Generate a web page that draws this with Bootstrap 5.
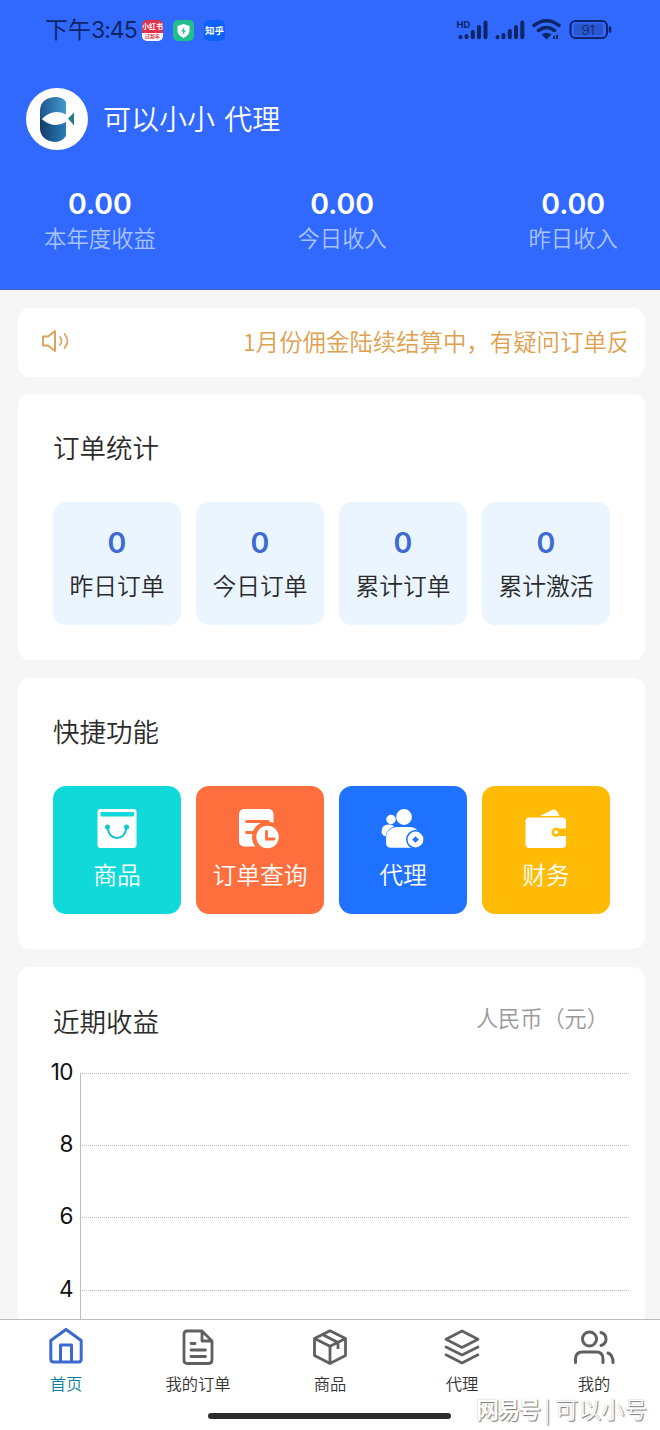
<!DOCTYPE html>
<html lang="zh-CN">
<head>
<meta charset="utf-8">
<meta name="viewport" content="width=device-width, initial-scale=1">
<title>首页</title>
<link rel="stylesheet" href="https://cdn.jsdelivr.net/npm/bootstrap@5.3.0/dist/css/bootstrap.min.css">
<style>
body{width:660px;height:1430px;overflow:hidden;background:#f6f6f7;color:#2b2b2b;font-family:Inter,"Noto Sans CJK SC",sans-serif;font-weight:350;line-height:1}
.cjk{font-family:"Noto Sans CJK SC",sans-serif}
svg{display:block;flex:none}
.hero{height:290px;background:#3169ff;border-bottom:1px solid #3b63d5}
.status{height:58px;padding:2px 48px 0 45px;color:#0d2566}
.clock{width:93px;font-size:23px;font-weight:400;white-space:nowrap}
.clock span{letter-spacing:-1px}
.app{width:21px;height:21px;border-radius:5px;overflow:hidden;font-size:7px;font-weight:700;line-height:12px;text-align:center;color:#fff;white-space:nowrap}
.user{margin-top:30px;height:62px;padding-left:26px;gap:15px}
.user-name{font-size:28px;white-space:pre;word-spacing:3px;padding-bottom:2px}
.figures{margin-top:36px;padding:0 42px 0 44px;text-align:center}
.figures b{display:block;font-size:28.5px;font-weight:600;line-height:36px}
.figures span{display:block;font-size:22.4px;line-height:32px;margin-top:1px;color:#a9c3ff}
.panel{margin-left:18px;width:627px;background:#fff;border-radius:12px}
.notice{margin-top:18px;height:69px;padding:0 19px 4px 23px;color:#e0a04e}
.ticker{margin-left:172px;width:383px;overflow:hidden;white-space:nowrap;font-size:23.4px;line-height:36px}
.panel h2{margin:0;font-size:26.5px;font-weight:350;line-height:36px}
.orders{margin-top:17px;height:266px;padding:36px 35px 0}
.quick{margin-top:18px;height:271px;padding:36px 35px 0}
.tiles{display:grid;grid-template-columns:repeat(4,128px);gap:15px;text-align:center;margin-top:36px}
.tile{border-radius:13px;font-size:23.8px}
.orders .tile{height:123px;background:#eaf5ff;padding-top:23px}
.orders b{display:block;font-size:28.5px;font-weight:600;line-height:36px;color:#3d6bd3}
.orders .tile span{display:block;line-height:36px;margin-top:8px}
.quick .tile{height:128px;color:#fff;padding-top:22px}
.quick .tile svg{margin:0 auto}
.quick .tile span{display:block;line-height:36px;margin-top:7px}
.income{margin-top:18px;height:352px;padding:37px 16px 0 35px;border-radius:12px 12px 0 0;overflow:hidden}
.unit{font-size:22.2px;line-height:30px;color:#999;margin-right:20px}
.chart{display:grid;grid-template-columns:20px 549px;column-gap:7px;margin-top:33px}
.ylab{font-size:22.5px;font-weight:400;color:#111;height:72.2px;line-height:22px;display:flex;justify-content:flex-end;letter-spacing:-.5px}
.ylab span{margin-top:-12px;height:22px}
.cell{height:72.2px;border-left:1px solid #bdbdbd;border-top:1px dotted #bbb}
.tabs{height:111px;background:#fff;border-top:1px solid #bcbcbc}
.tab-item{width:132px;font-size:16.3px;line-height:24px;color:#333;padding-top:8px}
.tab-item svg{margin-bottom:6px}
.pill{position:absolute;left:208px;top:1413px;width:243px;height:6px;border-radius:3px;background:#2c2c2c}
.wm{position:absolute;left:476px;top:1393px;font-size:23px;line-height:30px;white-space:nowrap;color:#fff;text-shadow:1px 1px 1px #777,0 0 1px #aaa}
.wm-brand{font-weight:700;letter-spacing:-2px}
</style>
</head>
<body class="d-flex flex-column">
<header class="hero flex-shrink-0 text-white">
  <div class="status d-flex align-items-center">
    <div class="clock">下午<span>3:45</span></div>
    <div class="d-flex ms-1" style="gap:10px">
      <div class="app cjk" style="background:linear-gradient(#df3149 62%,#fff 62%)">小红书<div style="color:#df3149;font-size:5px;line-height:7px">过新年</div></div>
      <div class="app" style="background:#20bf8c"><svg width="21" height="21" viewBox="0 0 21 21"><path d="M10.500 4l6 2v5c0 3-2.500 5-6 7-3.500-2-6-4-6-7V6z" fill="#fff"/><path d="M11.500 7l-3.500 4.500h2.300L9.500 15l3.500-4.500h-2.300z" fill="#20bf8c"/></svg></div>
      <div class="app cjk" style="background:#0e62f5;font-size:9.500px;line-height:20px">知乎</div>
    </div>
    <svg class="ms-auto" width="156" height="24" viewBox="456 18 156 24" fill="none" stroke="#0d2566">
      <text x="456.500" y="27.500" font-family="Inter" font-size="9.500" font-weight="700" fill="#0d2566" stroke="none">HD</text>
      <g stroke-width="4" stroke-linecap="round"><path d="M460.500 37v.3M466.500 36v1.300M472.800 32v5.300M479 27v10.300M485.500 22.500v14.800M497.500 37v.3M503.500 35v2.300M509.800 31v6.300M516 27v10.300M522.300 22.500v14.800"/></g>
      <path d="M534 25.500q12.500-9.500 25 0M538.500 30.500q8-6 16 0" stroke-width="3.500" stroke-linecap="round"/><path d="M541.500 34.500q5-3.500 10 0l-5 5z" fill="#0d2566" stroke="none"/><path d="M554 39v-3m3-1v4" stroke-width="2"/>
      <rect x="570.500" y="21" width="36.500" height="17" rx="5" stroke-width="2"/><rect x="574" y="23.500" width="29" height="12" rx="2" fill="#2a57cf" stroke="none"/><path d="M610 27.500v4" stroke-width="2.500" stroke-linecap="round"/>
      <text x="581.500" y="34.500" font-family="Inter" font-size="13.500" fill="#0d2566" stroke="none">91</text>
    </svg>
  </div>
  <div class="user d-flex align-items-center">
    <svg width="62" height="62" viewBox="0 0 62 62"><defs><linearGradient id="fa" x2="1"><stop stop-color="#1c568c"/><stop offset="1" stop-color="#4499cf"/></linearGradient><linearGradient id="fb" x2="1"><stop stop-color="#163b68"/><stop offset="1" stop-color="#287eb9"/></linearGradient></defs><circle cx="31" cy="31" r="31" fill="#fff"/><path d="M14 32V22Q15 10 29 9q8 0 11 5v12.500Q27 20 16 31z" fill="url(#fa)"/><path d="M14 30l3 2q11 9 23 2v14q-4 6-12 6-13-2-14-13z" fill="url(#fb)"/><path d="M42 30.500l6-6v13z" fill="#287a8b"/></svg>
    <div class="user-name cjk">可以小小 代理</div>
  </div>
  <div class="figures d-flex justify-content-between">
    <div><b>0.00</b><span>本年度收益</span></div>
    <div><b>0.00</b><span>今日收入</span></div>
    <div><b>0.00</b><span>昨日收入</span></div>
  </div>
</header>

<section class="panel notice d-flex align-items-center flex-shrink-0">
  <svg width="30" height="26" viewBox="0 0 30 26" fill="none" stroke="#dba45c" stroke-width="2" stroke-linejoin="round" stroke-linecap="round"><path d="M2 8.500h5L14 3v20l-7-5.500H2z"/><path d="M19 9q3 4 0 8M23.500 6q6 7 0 14" stroke-width="1.700"/></svg>
  <div class="ticker cjk">1月份佣金陆续结算中，有疑问订单反</div>
</section>

<section class="panel orders flex-shrink-0">
  <h2>订单统计</h2>
  <div class="tiles">
    <div class="tile"><b>0</b><span>昨日订单</span></div>
    <div class="tile"><b>0</b><span>今日订单</span></div>
    <div class="tile"><b>0</b><span>累计订单</span></div>
    <div class="tile"><b>0</b><span>累计激活</span></div>
  </div>
</section>

<section class="panel quick flex-shrink-0">
  <h2>快捷功能</h2>
  <div class="tiles">
    <div class="tile" style="background:#12d9d9"><svg width="44" height="43" viewBox="0 0 44 43"><rect x="2.500" y="1" width="39" height="39" rx="3" fill="#fff"/><rect x="5.500" y="4" width="33.500" height="4.500" rx="1" fill="#12d9d9"/><path d="M12.500 20q2 10 9.500 10t9.500-10" fill="none" stroke="#12c7c9" stroke-width="2"/><circle cx="12.500" cy="19" r="2.500" fill="#12c7c9"/><circle cx="31.500" cy="19" r="2.500" fill="#12c7c9"/></svg><span>商品</span></div>
    <div class="tile" style="background:#ff6f3d"><svg width="44" height="43" viewBox="0 0 44 43"><rect x="1" y="1" width="34.500" height="37.500" rx="5" fill="#fff"/><path d="M8.500 13.500H30M8.500 24.500H15" stroke="#ff6f3d" stroke-width="2.800" stroke-linecap="round"/><circle cx="29.500" cy="29" r="15.500" fill="#ff6f3d"/><circle cx="29.500" cy="29" r="11.200" fill="#fff"/><path d="M28.500 23.500V31H36" fill="none" stroke="#ff6f3d" stroke-width="2.800" stroke-linecap="round"/></svg><span>订单查询</span></div>
    <div class="tile" style="background:#1f72ff"><svg width="44" height="43" viewBox="0 0 44 43"><circle cx="10" cy="11.500" r="4.700" fill="#fff"/><circle cx="23" cy="9" r="7.900" fill="#fff"/><path d="M4.500 28.500Q.500 27 .500 23.500q0-7 7.500-7 4 0 5 2-7.500 2.500-8.500 10z" fill="#fff"/><path d="M17 19h12q7 0 9 7v13.800H10q-5 0-5-5V31q0-12 12-12" fill="#fff"/><circle cx="34.500" cy="31.500" r="9.500" fill="#1f72ff"/><circle cx="34.500" cy="31.500" r="7.900" fill="#fff"/><path d="M34.500 28.200l3.300 3.300-3.300 3.300-3.300-3.300z" fill="#1f72ff"/></svg><span>代理</span></div>
    <div class="tile" style="background:#ffbb05"><svg width="44" height="43" viewBox="0 0 44 43"><path d="M16 8L29 1.500q4-1 6.500 6.500z" fill="#fff"/><rect x="1.500" y="9.500" width="40.500" height="30.500" rx="4" fill="#fff"/><path d="M43 20.500H32.500a3.500 3.500 0 000 7.500H43z" fill="#ffbb05"/><circle cx="32" cy="24.200" r="4.500" fill="#ffbb05"/><circle cx="32" cy="24.200" r="2" fill="#fff"/></svg><span>财务</span></div>
  </div>
</section>

<section class="panel income flex-shrink-0">
  <div class="d-flex justify-content-between"><h2>近期收益</h2><span class="unit">人民币（元）</span></div>
  <div class="chart">
    <div class="ylab"><span>10</span></div><div class="cell"></div>
    <div class="ylab"><span>8</span></div><div class="cell"></div>
    <div class="ylab"><span>6</span></div><div class="cell"></div>
    <div class="ylab"><span>4</span></div><div class="cell"></div>
  </div>
</section>

<nav class="tabs d-flex flex-shrink-0">
  <div class="tab-item d-flex flex-column align-items-center" style="color:#137fa0"><svg width="38" height="38" viewBox="0 0 38 38" fill="none" stroke="#3c69cf" stroke-width="3" stroke-linejoin="round"><path d="M3.800 12.500L19 1.500l15.200 11V31q0 3-3 3H6.800q-3 0-3-3z"/><path d="M13.500 34V17h11v17"/></svg>首页</div>
  <div class="tab-item d-flex flex-column align-items-center"><svg width="38" height="38" viewBox="0 0 38 38" fill="none" stroke="#606060" stroke-width="2.800" stroke-linejoin="round" stroke-linecap="round"><path d="M8 3h15l10 10v19q0 3.500-3.500 3.500H8.500Q5 35.500 5 32.500V6q0-3 3-3zM23 3v10h10M12 15.500h4M12 22h14.500M12 28.500h14.500"/></svg>我的订单</div>
  <div class="tab-item d-flex flex-column align-items-center"><svg width="38" height="38" viewBox="0 0 38 38" fill="none" stroke="#606060" stroke-width="2.800" stroke-linejoin="round"><path d="M19 2.800L34.500 10.500v17L19 35.500 3.500 27.500v-17zM3.500 10.500L19 18.200l15.500-7.700M19 18.200v17.300M11.500 6.500l15.500 8v6.500"/></svg>商品</div>
  <div class="tab-item d-flex flex-column align-items-center"><svg width="38" height="38" viewBox="0 0 38 38" fill="none" stroke="#606060" stroke-width="2.700" stroke-linejoin="round" stroke-linecap="round"><path d="M19 3l16 8.300-16 8.200-16-8.200zM3 19l16 8 16-8M3 26.800L19 35l16-8.200"/></svg>代理</div>
  <div class="tab-item d-flex flex-column align-items-center"><svg width="42" height="38" viewBox="0 0 42 38" fill="none" stroke="#606060" stroke-width="3" stroke-linecap="round"><circle cx="16.500" cy="11" r="7"/><path d="M28 4.500q5 1.500 5 6.500t-5 6.500M2.500 34.500V31q0-7 7-7h14q6.500 0 6.500 7v3.500M35 25q5 2 5 9.500"/></svg>我的</div>
</nav>
<div class="pill"></div>
<div class="wm cjk"><span class="wm-brand">网易号</span> | 可以小号</div>
<script src="https://cdn.jsdelivr.net/npm/bootstrap@5.3.0/dist/js/bootstrap.bundle.min.js"></script>
</body>
</html>
